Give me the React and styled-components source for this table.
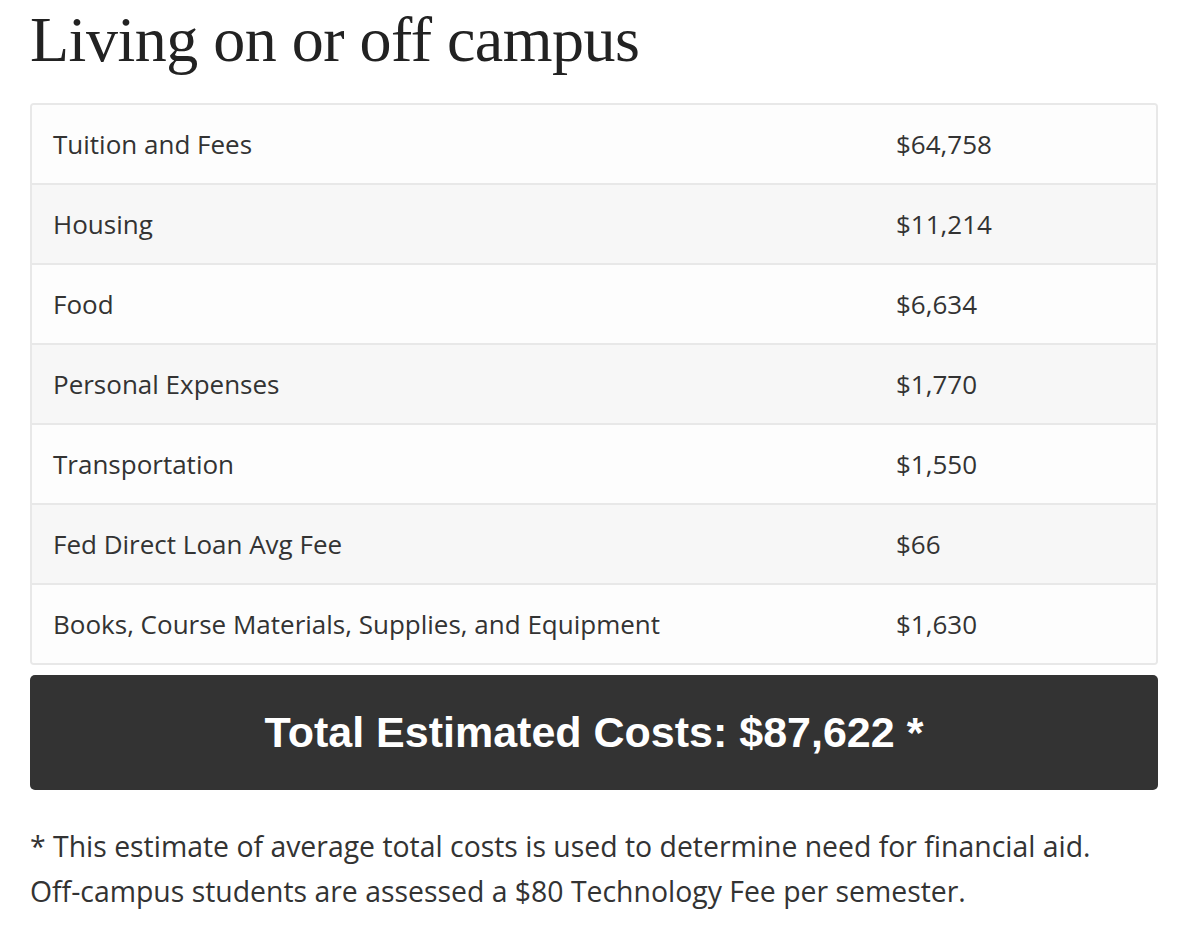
import React from 'react'
import styled, { createGlobalStyle } from 'styled-components'

const GlobalStyle = createGlobalStyle`
  body {
    margin: 0;
    background: #ffffff;
    font-family: "Open Sans", "Liberation Sans", sans-serif;
    color: #333333;
  }
`

const Page = styled.div`
  width: 1128px;
  padding: 0 0 0 30px;
`

const Heading = styled.h1`
  font-family: "Liberation Serif", "Times New Roman", serif;
  font-weight: normal;
  font-size: 64px;
  line-height: 1;
  color: #222222;
  margin: 8px 0 31px 0;
  letter-spacing: -0.5px;
`

const CostTable = styled.div`
  display: flex;
  flex-direction: column;
  border: 2px solid #e8e8e8;
  border-radius: 4px;
  overflow: hidden;
`

const Row = styled.div`
  display: grid;
  grid-template-columns: 843px 1fr;
  align-items: center;
  height: 78px;
  padding-left: 21px;
  background: ${props => (props.shaded ? '#f7f7f7' : '#fdfdfd')};
  border-top: ${props => (props.first ? 'none' : '2px solid #e8e8e8')};
  font-size: 26px;
  color: #333333;
`

const TotalBar = styled.div`
  margin-top: 10px;
  height: 115px;
  display: flex;
  align-items: center;
  justify-content: center;
  background: #333333;
  border-radius: 5px;
  color: #ffffff;
  font-family: "Liberation Sans", Arial, sans-serif;
  font-weight: bold;
  font-size: 43px;
`

const Note = styled.p`
  margin: 34px 0 0 0;
  font-size: 28.4px;
  line-height: 45px;
  color: #333333;
`

const costs = [
  ['Tuition and Fees', '$64,758'],
  ['Housing', '$11,214'],
  ['Food', '$6,634'],
  ['Personal Expenses', '$1,770'],
  ['Transportation', '$1,550'],
  ['Fed Direct Loan Avg Fee', '$66'],
  ['Books, Course Materials, Supplies, and Equipment', '$1,630'],
]

export default function App() {
  return (
    <Page>
      <GlobalStyle />
      <Heading>Living on or off campus</Heading>
      <CostTable>
        {costs.map(([label, amount], i) => (
          <Row key={label} first={i === 0} shaded={i % 2 === 1}>
            <span>{label}</span>
            <span>{amount}</span>
          </Row>
        ))}
      </CostTable>
      <TotalBar>Total Estimated Costs: $87,622 *</TotalBar>
      <Note>
        * This estimate of average total costs is used to determine need for financial aid.
        <br />
        Off-campus students are assessed a $80 Technology Fee per semester.
      </Note>
    </Page>
  )
}
